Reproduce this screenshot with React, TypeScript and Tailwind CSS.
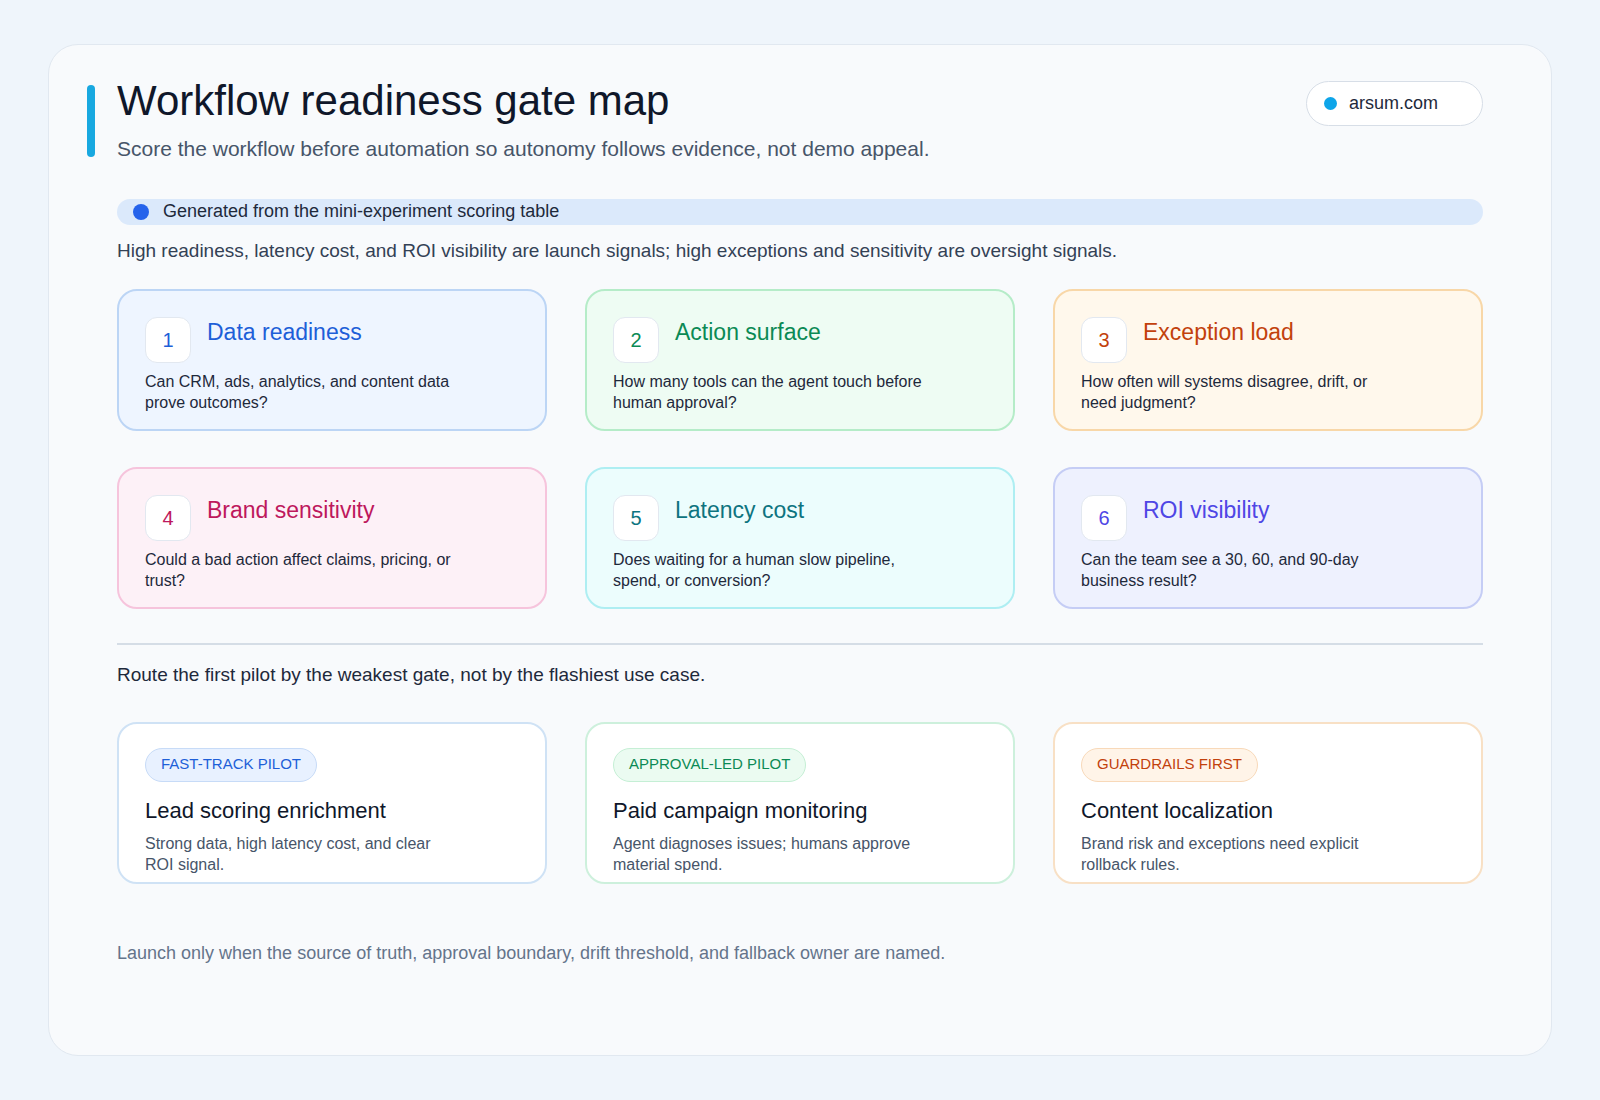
const gates = [
  { n: 1, t: "Data readiness", d: "Can CRM, ads, analytics, and content data prove outcomes?", box: "bg-[#eef5ff] border-[#bcd5f5]", c: "text-[#1d5fd8]" },
  { n: 2, t: "Action surface", d: "How many tools can the agent touch before human approval?", box: "bg-[#eefcf3] border-[#b5ecc8]", c: "text-[#0b8a55]" },
  { n: 3, t: "Exception load", d: "How often will systems disagree, drift, or need judgment?", box: "bg-[#fff8ec] border-[#f8d7a8]", c: "text-[#c2410c]" },
  { n: 4, t: "Brand sensitivity", d: "Could a bad action affect claims, pricing, or trust?", box: "bg-[#fdf1f7] border-[#f6c4dc]", c: "text-[#be185d]" },
  { n: 5, t: "Latency cost", d: "Does waiting for a human slow pipeline, spend, or conversion?", box: "bg-[#ecfdfd] border-[#aeeef2]", c: "text-[#0e7480]" },
  { n: 6, t: "ROI visibility", d: "Can the team see a 30, 60, and 90-day business result?", box: "bg-[#eef1fe] border-[#c5cdf5]", c: "text-[#4f46e5]" },
];

const pilots = [
  { tag: "FAST-TRACK PILOT", tagc: "bg-[#e8f1ff] border-[#c7dbf7] text-[#1d5fd8]", box: "border-[#cfe2f5]", t: "Lead scoring enrichment", d: "Strong data, high latency cost, and clear ROI signal." },
  { tag: "APPROVAL-LED PILOT", tagc: "bg-[#ebfbf1] border-[#c5efd5] text-[#0b8a55]", box: "border-[#cdf0dc]", t: "Paid campaign monitoring", d: "Agent diagnoses issues; humans approve material spend." },
  { tag: "GUARDRAILS FIRST", tagc: "bg-[#fff4e8] border-[#f8d9b9] text-[#c2410c]", box: "border-[#f8e0c5]", t: "Content localization", d: "Brand risk and exceptions need explicit rollback rules." },
];

export default function App() {
  return (
    <div className="min-h-[1100px] w-[1600px] bg-[#eff5fb] pt-[44px] pl-[48px]" style={{ fontFamily: '"Liberation Sans", Arial, sans-serif' }}>
      <div className="w-[1504px] h-[1012px] rounded-[30px] border border-[#e1e8f0] bg-[#f8fafc] px-[68px] pt-[32px]">
        <div className="flex items-start justify-between">
          <div className="relative">
            <div className="absolute -left-[30px] top-[8px] h-[72px] w-[8px] rounded-full bg-[#18a8e0]" />
            <h1 className="text-[42px] leading-[48px] text-[#0f172a]">Workflow readiness gate map</h1>
            <p className="mt-[8px] text-[21px] text-[#475569]">Score the workflow before automation so autonomy follows evidence, not demo appeal.</p>
          </div>
          <div className="mt-[4px] flex h-[45px] w-[177px] items-center gap-[12px] rounded-full border border-[#d7dee7] bg-white px-[17px] text-[18px] text-[#1e293b]">
            <span className="h-[13px] w-[13px] rounded-full bg-[#0ea5e9]" />arsum.com
          </div>
        </div>

        <div className="mt-[34px] flex h-[26px] items-center gap-[14px] rounded-full bg-[#dbe9fb] px-[16px] text-[18px] text-[#1e293b]">
          <span className="h-[16px] w-[16px] rounded-full bg-[#2563eb]" />Generated from the mini-experiment scoring table
        </div>
        <p className="mt-[12px] text-[19px] text-[#334155]">High readiness, latency cost, and ROI visibility are launch signals; high exceptions and sensitivity are oversight signals.</p>

        <div className="mt-[24px] grid grid-cols-3 gap-x-[38px] gap-y-[36px]">
          {gates.map((g) => (
            <div key={g.n} className={`h-[142px] rounded-[20px] border-2 px-[26px] pt-[26px] ${g.box}`}>
              <div className="flex gap-[16px]">
                <div className={`flex h-[46px] w-[46px] items-center justify-center rounded-[12px] border border-[#e2e8f0] bg-white text-[20px] ${g.c}`}>{g.n}</div>
                <div className={`text-[23px] leading-[30px] ${g.c}`}>{g.t}</div>
              </div>
              <p className="mt-[8px] w-[310px] text-[16px] leading-[21px] text-[#1e293b]">{g.d}</p>
            </div>
          ))}
        </div>

        <div className="mt-[34px] h-[2px] bg-[#d5dde6]" />
        <p className="mt-[16px] text-[19px] text-[#1e293b]">Route the first pilot by the weakest gate, not by the flashiest use case.</p>

        <div className="mt-[32px] grid grid-cols-3 gap-x-[38px]">
          {pilots.map((p) => (
            <div key={p.t} className={`h-[162px] rounded-[20px] border-2 bg-white px-[26px] pt-[24px] ${p.box}`}>
              <span className={`inline-flex h-[34px] items-center rounded-full border px-[15px] text-[15px] ${p.tagc}`}>{p.tag}</span>
              <div className="mt-[12px] text-[22px] text-[#0f172a]">{p.t}</div>
              <p className="mt-[6px] w-[300px] text-[16px] leading-[21px] text-[#475569]">{p.d}</p>
            </div>
          ))}
        </div>

        <p className="mt-[56px] text-[18px] text-[#64748b]">Launch only when the source of truth, approval boundary, drift threshold, and fallback owner are named.</p>
      </div>
    </div>
  );
}
